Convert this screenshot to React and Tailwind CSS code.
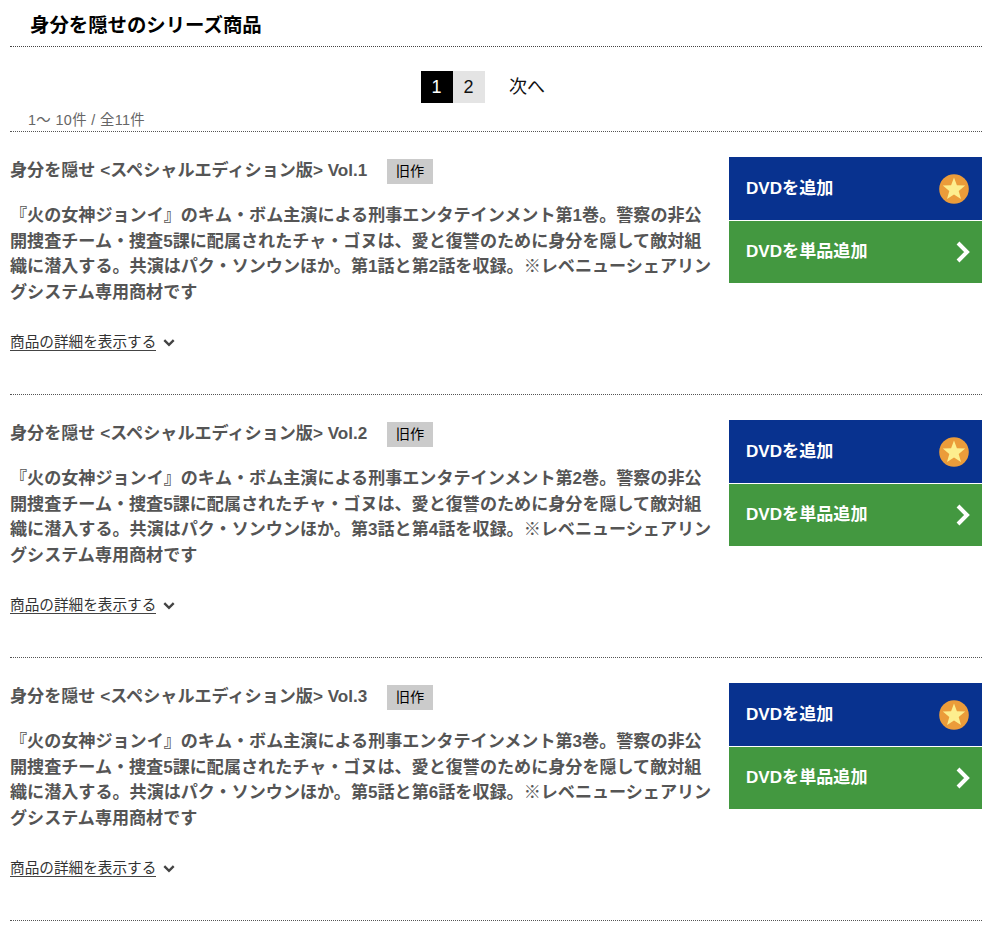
const PRODUCTS = [
  { vol: 1, episodes: ["第1話", "第2話"] },
  { vol: 2, episodes: ["第3話", "第4話"] },
  { vol: 3, episodes: ["第5話", "第6話"] },
];

function StarBadge() {
  return (
    <svg className="w-[30px] h-[30px]" viewBox="0 0 30 30">
      <circle cx="15" cy="15" r="14.8" fill="#eb9c3a" />
      <path
        d="M15 3.6 L17.9 11.3 L26.2 11.6 L19.7 16.9 L22 25 L15 20.4 L8 25 L10.3 16.9 L3.8 11.6 L12.1 11.3 Z"
        fill="#fdee8e"
      />
    </svg>
  );
}

function ArrowRight() {
  return (
    <svg className="w-[14px] h-[22px]" viewBox="0 0 14 22" fill="none" stroke="#fff" strokeWidth="4">
      <path d="M2 2 L11 11 L2 20" />
    </svg>
  );
}

function ArrowDown() {
  return (
    <svg className="w-[12px] h-[8px] ml-[7px]" viewBox="0 0 12 8" fill="none" stroke="#444" strokeWidth="2.4">
      <path d="M1.3 1.2 L6 5.8 L10.7 1.2" />
    </svg>
  );
}

function Product({ vol, episodes }) {
  return (
    <li className="flex h-[263px] justify-between border-b border-dotted border-[#555] pt-[25px]">
      <div className="w-[705px] whitespace-nowrap text-[#555] font-bold">
        <div className="flex items-center h-[27px]">
          <h3 className="w-[377px] text-[17.1px] leading-[27px]">
            身分を隠せ &lt;スペシャルエディション版&gt; Vol.{vol}
          </h3>
          <span className="flex items-center justify-center w-[46px] h-[25px] mt-[2px] pt-px bg-[#cbcbcb] text-black text-[14.2px] font-normal">
            旧作
          </span>
        </div>
        <p className="mt-[19px] text-[17.08px] leading-[25.7px]">
          『火の女神ジョンイ』のキム・ボム主演による刑事エンタテインメント第{vol}巻。警察の非公
          <br />
          開捜査チーム・捜査5課に配属されたチャ・ゴヌは、愛と復讐のために身分を隠して敵対組
          <br />
          織に潜入する。共演はパク・ソンウンほか。{episodes[0]}と{episodes[1]}を収録。
          <span className="font-['Noto_Sans_CJK_JP',sans-serif] leading-none">※</span>
          レベニューシェアリン
          <br />
          グシステム専用商材です
        </p>
        <div className="flex items-center h-[26px] mt-[24px] font-normal">
          <a className="text-[14.65px] leading-[16px] text-[#333] border-b border-[#444]">商品の詳細を表示する</a>
          <ArrowDown />
        </div>
      </div>
      <div className="flex flex-col gap-px w-[253px] text-white text-[17.1px] font-bold">
        <button className="flex items-center justify-between h-[63px] pl-[17px] pr-[13px] bg-[#08328f]">
          DVDを追加
          <StarBadge />
        </button>
        <button className="flex items-center justify-between h-[62px] pl-[17px] pr-[12px] bg-[#439840]">
          DVDを単品追加
          <ArrowRight />
        </button>
      </div>
    </li>
  );
}

export default function App() {
  return (
    <main className="w-[1000px] h-[930px] overflow-hidden bg-white pl-[10px] pr-[18px] font-['Liberation_Sans','Noto_Sans_CJK_JP',sans-serif]">
      <h2 className="h-[47px] pl-[20px] pt-[10px] border-b border-dotted border-[#444] text-[19.4px] leading-[30px] font-bold text-black">
        身分を隠せのシリーズ商品
      </h2>
      <div className="h-[85px] pt-[24px] border-b border-dotted border-[#555]">
        <nav className="flex items-center h-[32px] ml-[411px] text-[18px] text-[#111]">
          <span className="w-[32px] h-[32px] pr-px leading-[32px] text-center bg-black text-white">1</span>
          <span className="w-[32px] h-[32px] pr-px leading-[32px] text-center bg-[#e4e4e4]">2</span>
          <span className="ml-[24px]">次へ</span>
        </nav>
        <p className="mt-[7px] pl-[18px] text-[14.4px] leading-[20px] tracking-[0.35px] text-[#666]">
          1〜 10件 / 全11件
        </p>
      </div>
      <ul>
        {PRODUCTS.map((p) => (
          <Product key={p.vol} {...p} />
        ))}
      </ul>
    </main>
  );
}
